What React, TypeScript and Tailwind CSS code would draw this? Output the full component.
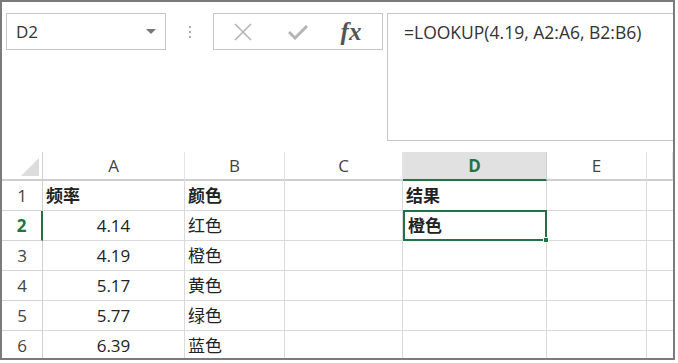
import React from "react";

const font = { fontFamily: '"Open Sans", "Noto Sans", "Noto Sans CJK SC", sans-serif' };

const cols = ["A", "B", "C", "D", "E", ""];
const rows: [string, string, string, string][] = [
  ["频率", "颜色", "结果", "h"],
  ["4.14", "红色", "橙色", "n"],
  ["4.19", "橙色", "", "n"],
  ["5.17", "黄色", "", "n"],
  ["5.77", "绿色", "", "n"],
  ["6.39", "蓝色", "", "n"],
];

export default function App() {
  return (
    <div className="w-[678px] h-[363px] bg-white" style={font}>
      <div className="w-[675px] h-[360px] border-2 border-[#7b7b7b] flex flex-col overflow-hidden">
        {/* Formula bar */}
        <div className="h-[150px] flex items-start pt-[11px] pl-[4px] shrink-0">
          <div className="w-[160px] h-[37px] border border-[#c6c6c6] flex items-center pl-[9px] pr-[9px] justify-between">
            <span className="text-[17px] text-[#333]">D2</span>
            <svg width="10" height="6" viewBox="0 0 10 6"><path d="M0 0 L10 0 L5 5 Z" fill="#777" /></svg>
          </div>
          <div className="w-[47px] h-[37px] flex flex-col items-center justify-center gap-[3px]">
            <div className="w-[2px] h-[2px] bg-[#aaa]" />
            <div className="w-[2px] h-[2px] bg-[#aaa]" />
            <div className="w-[2px] h-[2px] bg-[#aaa]" />
          </div>
          <div className="w-[170px] h-[37px] border border-[#c6c6c6] flex items-center">
            <div className="w-[56px] flex justify-center pl-[2px]">
              <svg width="18" height="18" viewBox="0 0 18 18"><path d="M1 1 L17 17 M17 1 L1 17" stroke="#b4b4b4" strokeWidth="1.6" /></svg>
            </div>
            <div className="w-[56px] flex justify-center">
              <svg width="20" height="16" viewBox="0 0 20 16"><path d="M1 8 L7 14 L19 2" stroke="#b4b4b4" strokeWidth="3" fill="none" /></svg>
            </div>
            <div className="flex-1 flex justify-center pr-[6px]">
              <span className="text-[25px] italic font-bold text-[#555] leading-none" style={{ fontFamily: '"Liberation Serif", serif' }}>fx</span>
            </div>
          </div>
          <div className="ml-[4px] flex-1 h-[128px] border border-r-0 border-[#c6c6c6] pl-[16px] pt-[5px]">
            <span className="text-[17.5px] text-[#333]">=LOOKUP(4.19, A2:A6, B2:B6)</span>
          </div>
        </div>
        {/* Grid */}
        <div className="grid grid-cols-[41px_142px_100px_118px_144px_100px_1fr] grid-rows-[29px_30px_30px_30px_30px_30px_30px]">
          <div className="border-r border-b-2 border-[#cfcfcf] flex items-end justify-end pr-[3px] pb-[3px]">
            <svg width="18" height="18" viewBox="0 0 18 18"><path d="M18 0 L18 18 L0 18 Z" fill="#dcdcdc" /></svg>
          </div>
          {cols.map((c, i) =>
            c === "D" ? (
              <div key={i} className="bg-[#e1e1e1] border-r border-r-[#cfcfcf] border-b-2 border-b-[#217346] flex items-center justify-center text-[17px] font-bold text-[#217346]">
                {c}
              </div>
            ) : (
              <div key={i} className="border-r border-b-2 border-[#cfcfcf] border-r-[#e4e4e4] flex items-center justify-center text-[17px] text-[#444]">
                {c}
              </div>
            )
          )}
          {rows.map((r, ri) => {
            const sel = ri === 1;
            const head = r[3] === "h";
            return (
              <React.Fragment key={ri}>
                <div
                  className={
                    sel
                      ? "border-r-2 border-r-[#217346] border-b border-b-[#d4d4d4] flex items-center justify-center text-[17px] font-bold text-[#217346]"
                      : "border-r border-r-[#cfcfcf] border-b border-b-[#d4d4d4] flex items-center justify-center text-[17px] text-[#444]"
                  }
                >
                  {ri + 1}
                </div>
                <div className={"border-r border-b border-[#dadada] flex items-center text-[17px] text-[#222] " + (head ? "font-bold justify-start pl-[3px]" : "justify-center")}>
                  {r[0]}
                </div>
                <div className={"border-r border-b border-[#dadada] flex items-center pl-[3px] text-[17px] text-[#222] " + (head ? "font-bold" : "")}>
                  {r[1]}
                </div>
                <div className="border-r border-b border-[#dadada]" />
                {sel ? (
                  <div className="relative border-2 border-[#217346] -mt-[1px] flex items-center pl-[3px] text-[17px] font-bold text-[#222]">
                    {r[2]}
                    <div className="absolute w-[6px] h-[6px] bg-[#217346] -right-[4px] -bottom-[4px] border border-white" />
                  </div>
                ) : (
                  <div className="border-r border-b border-[#dadada] flex items-center pl-[3px] text-[17px] font-bold text-[#222]">
                    {r[2]}
                  </div>
                )}
                <div className="border-r border-b border-[#dadada]" />
                <div className="border-b border-[#dadada]" />
              </React.Fragment>
            );
          })}
        </div>
      </div>
    </div>
  );
}
